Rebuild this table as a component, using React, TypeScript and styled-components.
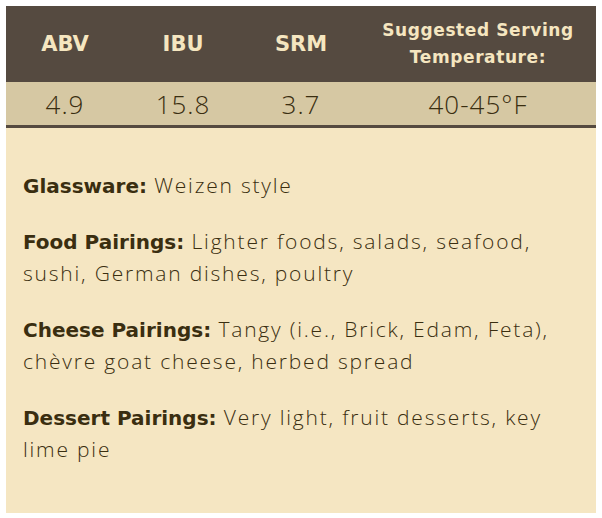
import styled, { createGlobalStyle } from "styled-components";

const GlobalStyle = createGlobalStyle`
  body {
    margin: 0;
    background: #ffffff;
    font-family: "Open Sans", Lato, sans-serif;
  }
`;

const Card = styled.div`
  width: 590px;
  margin: 6px;
  background: #f5e6c2;
`;

const StatsGrid = styled.div`
  display: grid;
  grid-template-columns: 1fr 1fr 1fr 2fr;
  border-bottom: 3px solid #554a40;
`;

const HeadCell = styled.div<{ $small?: boolean }>`
  background: #554a40;
  color: #f5e6c0;
  height: 76px;
  display: flex;
  align-items: center;
  justify-content: center;
  text-align: center;
  font-family: "DejaVu Sans", sans-serif;
  font-weight: 700;
  font-size: ${(p) => (p.$small ? "17px" : "21px")};
  line-height: ${(p) => (p.$small ? "27px" : "26px")};
  letter-spacing: ${(p) => (p.$small ? "0.6px" : "0")};
`;

const ValueCell = styled.div`
  background: #d6c8a3;
  color: #3a2e10;
  height: 43px;
  display: flex;
  align-items: center;
  justify-content: center;
  font-size: 26px;
  font-weight: 300;
  letter-spacing: 1px;
`;

const Details = styled.div`
  padding: 41px 17px 48px;
  display: flex;
  flex-direction: column;
  gap: 24px;
`;

const Line = styled.p`
  margin: 0;
  color: #3a2e10;
  font-size: 21px;
  line-height: 32px;
  font-weight: 300;
  letter-spacing: 1.8px;
`;

const Label = styled.strong`
  font-family: "DejaVu Sans", sans-serif;
  font-weight: 700;
  font-size: 20px;
  line-height: 1;
  letter-spacing: 0;
`;

const stats = [
  { label: "ABV", value: "4.9" },
  { label: "IBU", value: "15.8" },
  { label: "SRM", value: "3.7" },
];

const pairings = [
  { label: "Glassware:", text: "Weizen style" },
  { label: "Food Pairings:", text: "Lighter foods, salads, seafood, sushi, German dishes, poultry" },
  { label: "Cheese Pairings:", text: "Tangy (i.e., Brick, Edam, Feta), chèvre goat cheese, herbed spread" },
  { label: "Dessert Pairings:", text: "Very light, fruit desserts, key lime pie" },
];

export default function App() {
  return (
    <>
      <GlobalStyle />
      <Card>
        <StatsGrid>
          {stats.map((s) => (
            <HeadCell key={s.label}>{s.label}</HeadCell>
          ))}
          <HeadCell $small>
            Suggested Serving
            <br />
            Temperature:
          </HeadCell>
          {stats.map((s) => (
            <ValueCell key={s.label}>{s.value}</ValueCell>
          ))}
          <ValueCell>40-45°F</ValueCell>
        </StatsGrid>
        <Details>
          {pairings.map((p) => (
            <Line key={p.label}>
              <Label>{p.label}</Label> {p.text}
            </Line>
          ))}
        </Details>
      </Card>
    </>
  );
}
